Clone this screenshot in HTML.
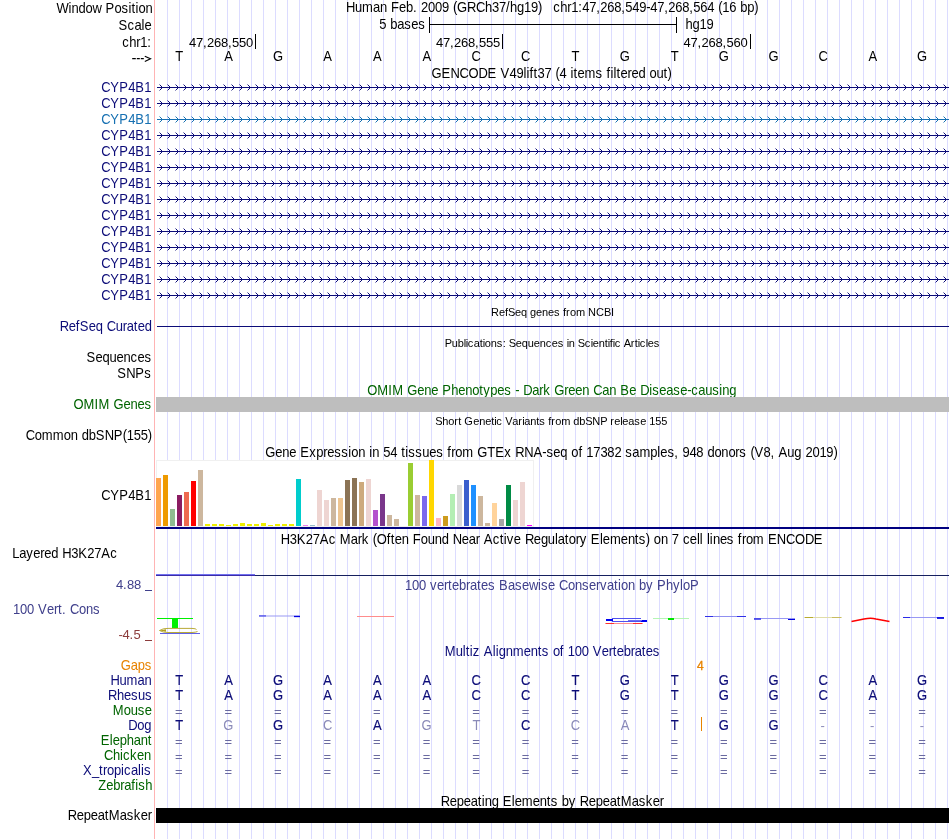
<!DOCTYPE html>
<html><head><meta charset="utf-8"><style>
html,body{margin:0;padding:0;background:#fff;width:950px;height:839px;overflow:hidden}
svg{display:block;font-family:"Liberation Sans",sans-serif;will-change:transform;font-kerning:none;font-variant-ligatures:none}
</style></head><body>
<svg width="950" height="839" viewBox="0 0 950 839" xml:space="preserve">
<g shape-rendering="crispEdges">
<rect x="154" y="0" width="1" height="839" fill="#ffb4b4" />
<rect x="167" y="0" width="1" height="839" fill="#dcdcff" />
<rect x="179" y="0" width="1" height="839" fill="#dcdcff" />
<rect x="191" y="0" width="1" height="839" fill="#dcdcff" />
<rect x="203" y="0" width="1" height="839" fill="#dcdcff" />
<rect x="215" y="0" width="1" height="839" fill="#dcdcff" />
<rect x="227" y="0" width="1" height="839" fill="#dcdcff" />
<rect x="239" y="0" width="1" height="839" fill="#dcdcff" />
<rect x="251" y="0" width="1" height="839" fill="#dcdcff" />
<rect x="263" y="0" width="1" height="839" fill="#dcdcff" />
<rect x="275" y="0" width="1" height="839" fill="#dcdcff" />
<rect x="287" y="0" width="1" height="839" fill="#dcdcff" />
<rect x="299" y="0" width="1" height="839" fill="#dcdcff" />
<rect x="311" y="0" width="1" height="839" fill="#dcdcff" />
<rect x="323" y="0" width="1" height="839" fill="#dcdcff" />
<rect x="335" y="0" width="1" height="839" fill="#dcdcff" />
<rect x="347" y="0" width="1" height="839" fill="#dcdcff" />
<rect x="359" y="0" width="1" height="839" fill="#dcdcff" />
<rect x="371" y="0" width="1" height="839" fill="#dcdcff" />
<rect x="383" y="0" width="1" height="839" fill="#dcdcff" />
<rect x="395" y="0" width="1" height="839" fill="#dcdcff" />
<rect x="407" y="0" width="1" height="839" fill="#dcdcff" />
<rect x="419" y="0" width="1" height="839" fill="#dcdcff" />
<rect x="431" y="0" width="1" height="839" fill="#dcdcff" />
<rect x="443" y="0" width="1" height="839" fill="#dcdcff" />
<rect x="455" y="0" width="1" height="839" fill="#dcdcff" />
<rect x="467" y="0" width="1" height="839" fill="#dcdcff" />
<rect x="479" y="0" width="1" height="839" fill="#dcdcff" />
<rect x="491" y="0" width="1" height="839" fill="#dcdcff" />
<rect x="503" y="0" width="1" height="839" fill="#dcdcff" />
<rect x="515" y="0" width="1" height="839" fill="#dcdcff" />
<rect x="527" y="0" width="1" height="839" fill="#dcdcff" />
<rect x="539" y="0" width="1" height="839" fill="#dcdcff" />
<rect x="551" y="0" width="1" height="839" fill="#dcdcff" />
<rect x="563" y="0" width="1" height="839" fill="#dcdcff" />
<rect x="575" y="0" width="1" height="839" fill="#dcdcff" />
<rect x="587" y="0" width="1" height="839" fill="#dcdcff" />
<rect x="599" y="0" width="1" height="839" fill="#dcdcff" />
<rect x="611" y="0" width="1" height="839" fill="#dcdcff" />
<rect x="623" y="0" width="1" height="839" fill="#dcdcff" />
<rect x="635" y="0" width="1" height="839" fill="#dcdcff" />
<rect x="647" y="0" width="1" height="839" fill="#dcdcff" />
<rect x="659" y="0" width="1" height="839" fill="#dcdcff" />
<rect x="671" y="0" width="1" height="839" fill="#dcdcff" />
<rect x="683" y="0" width="1" height="839" fill="#dcdcff" />
<rect x="695" y="0" width="1" height="839" fill="#dcdcff" />
<rect x="707" y="0" width="1" height="839" fill="#dcdcff" />
<rect x="719" y="0" width="1" height="839" fill="#dcdcff" />
<rect x="731" y="0" width="1" height="839" fill="#dcdcff" />
<rect x="743" y="0" width="1" height="839" fill="#dcdcff" />
<rect x="755" y="0" width="1" height="839" fill="#dcdcff" />
<rect x="767" y="0" width="1" height="839" fill="#dcdcff" />
<rect x="779" y="0" width="1" height="839" fill="#dcdcff" />
<rect x="791" y="0" width="1" height="839" fill="#dcdcff" />
<rect x="803" y="0" width="1" height="839" fill="#dcdcff" />
<rect x="815" y="0" width="1" height="839" fill="#dcdcff" />
<rect x="827" y="0" width="1" height="839" fill="#dcdcff" />
<rect x="839" y="0" width="1" height="839" fill="#dcdcff" />
<rect x="851" y="0" width="1" height="839" fill="#dcdcff" />
<rect x="863" y="0" width="1" height="839" fill="#dcdcff" />
<rect x="875" y="0" width="1" height="839" fill="#dcdcff" />
<rect x="887" y="0" width="1" height="839" fill="#dcdcff" />
<rect x="899" y="0" width="1" height="839" fill="#dcdcff" />
<rect x="911" y="0" width="1" height="839" fill="#dcdcff" />
<rect x="923" y="0" width="1" height="839" fill="#dcdcff" />
<rect x="935" y="0" width="1" height="839" fill="#dcdcff" />
<rect x="947" y="0" width="1" height="839" fill="#dcdcff" />
</g>
<text transform="translate(56.40,13) scale(0.9286,1)" x="0.00 12.92 16.15 23.69 31.23 38.77 48.46 52.77 62.46 70.00 77.54 80.77 85.08 88.31 95.85" fill="#000" font-size="14">Window Position</text>
<text transform="translate(118.57,30) scale(0.9286,1)" x="0.00 9.69 17.23 24.77 28.00" fill="#000" font-size="14">Scale</text>
<text transform="translate(122.17,47) scale(0.9286,1)" x="0.00 7.54 15.08 19.38 26.92" fill="#000" font-size="14">chr1:</text>
<path d="M132.2 58.6H135.8M136.8 58.6H139.8M140.8 58.6H143.8M144.8 56.2L150.5 58.8L144.8 61.4" stroke="#000" stroke-width="1.15" fill="none"/>
<text transform="translate(345.97,12) scale(0.9286,1)" x="0.00 9.69 17.23 29.08 36.62 44.15 48.46 57.08 64.62 72.15 76.46 80.77 88.31 95.85 103.38 110.92 115.23 119.54 130.31 140.00 149.69 157.23 164.77 172.31 176.62 184.15 191.69 199.23 206.77" fill="#000" font-size="14">Human Feb. 2009 (GRCh37/hg19)</text>
<text transform="translate(553.17,12) scale(0.9286,1)" x="0.00 7.54 15.08 19.38 26.92 31.23 38.77 46.31 50.62 58.15 65.69 73.23 77.54 85.08 92.62 100.15 104.46 112.00 119.54 123.85 131.38 138.92 146.46 150.77 158.31 165.85 173.38 177.69 182.00 189.54 197.08 201.38 208.92 216.46" fill="#000" font-size="14">chr1:47,268,549-47,268,564 (16 bp)</text>
<text transform="translate(379.37,29) scale(0.9286,1)" x="0.00 7.54 11.85 19.38 26.92 34.46 42.00" fill="#000" font-size="14">5 bases</text>
<g shape-rendering="crispEdges">
<rect x="429" y="17" width="1" height="16" fill="#000" />
<rect x="676" y="17" width="1" height="16" fill="#000" />
<rect x="429" y="24" width="248" height="1" fill="#000" />
<rect x="255" y="34" width="1" height="15" fill="#000" />
<rect x="502" y="34" width="1" height="15" fill="#000" />
<rect x="750" y="34" width="1" height="15" fill="#000" />
</g>
<text transform="translate(685.57,29) scale(0.9286,1)" x="0.00 7.54 15.08 22.62" fill="#000" font-size="14">hg19</text>
<text transform="translate(189.00,47) scale(1.0000,1)" x="0.00 7.00 14.00 18.00 25.00 32.00 39.00 43.00 50.00 57.00" fill="#000" font-size="13">47,268,550</text>
<text transform="translate(436.10,47) scale(1.0000,1)" x="0.00 7.00 14.00 18.00 25.00 32.00 39.00 43.00 50.00 57.00" fill="#000" font-size="13">47,268,555</text>
<text transform="translate(683.50,47) scale(1.0000,1)" x="0.00 7.00 14.00 18.00 25.00 32.00 39.00 43.00 50.00 57.00" fill="#000" font-size="13">47,268,560</text>
<text transform="translate(175.19,61) scale(0.9286,1)" fill="#000" font-size="14">T</text>
<text transform="translate(224.27,61) scale(0.9286,1)" fill="#000" font-size="14">A</text>
<text transform="translate(272.89,61) scale(0.9286,1)" fill="#000" font-size="14">G</text>
<text transform="translate(323.37,61) scale(0.9286,1)" fill="#000" font-size="14">A</text>
<text transform="translate(372.92,61) scale(0.9286,1)" fill="#000" font-size="14">A</text>
<text transform="translate(422.47,61) scale(0.9286,1)" fill="#000" font-size="14">A</text>
<text transform="translate(471.56,61) scale(0.9286,1)" fill="#000" font-size="14">C</text>
<text transform="translate(521.11,61) scale(0.9286,1)" fill="#000" font-size="14">C</text>
<text transform="translate(571.59,61) scale(0.9286,1)" fill="#000" font-size="14">T</text>
<text transform="translate(619.74,61) scale(0.9286,1)" fill="#000" font-size="14">G</text>
<text transform="translate(670.69,61) scale(0.9286,1)" fill="#000" font-size="14">T</text>
<text transform="translate(718.84,61) scale(0.9286,1)" fill="#000" font-size="14">G</text>
<text transform="translate(768.39,61) scale(0.9286,1)" fill="#000" font-size="14">G</text>
<text transform="translate(818.41,61) scale(0.9286,1)" fill="#000" font-size="14">C</text>
<text transform="translate(868.42,61) scale(0.9286,1)" fill="#000" font-size="14">A</text>
<text transform="translate(917.04,61) scale(0.9286,1)" fill="#000" font-size="14">G</text>
<text transform="translate(431.47,78) scale(0.9286,1)" x="0.00 10.77 20.46 30.15 39.85 50.62 60.31 70.00 74.31 84.00 91.54 99.08 102.31 105.54 109.85 114.15 121.69 129.23 133.54 137.85 145.38 149.69 152.92 157.23 164.77 176.62 184.15 188.46 192.77 196.00 199.23 203.54 211.08 215.38 222.92 230.46 234.77 242.31 249.85 254.15" fill="#000" font-size="14">GENCODE V49lift37 (4 items filtered out)</text>
<defs>
<pattern id="chevN" x="157" y="0" width="8" height="16" patternUnits="userSpaceOnUse"><g shape-rendering="crispEdges" fill="#0c0c78"><rect x="0" y="7" width="8" height="1"/><rect x="2" y="4" width="1" height="1" opacity="0.45"/><rect x="3" y="5" width="1" height="1"/><rect x="4" y="6" width="1" height="3"/><rect x="3" y="9" width="1" height="1"/><rect x="2" y="10" width="1" height="1" opacity="0.45"/></g></pattern>
<pattern id="chevT" x="157" y="0" width="8" height="16" patternUnits="userSpaceOnUse"><g shape-rendering="crispEdges" fill="#1670b2"><rect x="0" y="7" width="8" height="1"/><rect x="2" y="4" width="1" height="1" opacity="0.45"/><rect x="3" y="5" width="1" height="1"/><rect x="4" y="6" width="1" height="3"/><rect x="3" y="9" width="1" height="1"/><rect x="2" y="10" width="1" height="1" opacity="0.45"/></g></pattern>
</defs>
<text transform="translate(101.27,92) scale(0.9286,1)" x="0.00 9.69 19.38 29.08 36.62 46.31" fill="#0c0c78" font-size="14">CYP4B1</text>
<rect x="157" y="80" width="792" height="16" fill="url(#chevN)" shape-rendering="crispEdges"/>
<text transform="translate(101.27,108) scale(0.9286,1)" x="0.00 9.69 19.38 29.08 36.62 46.31" fill="#0c0c78" font-size="14">CYP4B1</text>
<rect x="157" y="96" width="792" height="16" fill="url(#chevN)" shape-rendering="crispEdges"/>
<text transform="translate(101.27,124) scale(0.9286,1)" x="0.00 9.69 19.38 29.08 36.62 46.31" fill="#1670b2" font-size="14">CYP4B1</text>
<rect x="157" y="112" width="792" height="16" fill="url(#chevT)" shape-rendering="crispEdges"/>
<text transform="translate(101.27,140) scale(0.9286,1)" x="0.00 9.69 19.38 29.08 36.62 46.31" fill="#0c0c78" font-size="14">CYP4B1</text>
<rect x="157" y="128" width="792" height="16" fill="url(#chevN)" shape-rendering="crispEdges"/>
<text transform="translate(101.27,156) scale(0.9286,1)" x="0.00 9.69 19.38 29.08 36.62 46.31" fill="#0c0c78" font-size="14">CYP4B1</text>
<rect x="157" y="144" width="792" height="16" fill="url(#chevN)" shape-rendering="crispEdges"/>
<text transform="translate(101.27,172) scale(0.9286,1)" x="0.00 9.69 19.38 29.08 36.62 46.31" fill="#0c0c78" font-size="14">CYP4B1</text>
<rect x="157" y="160" width="792" height="16" fill="url(#chevN)" shape-rendering="crispEdges"/>
<text transform="translate(101.27,188) scale(0.9286,1)" x="0.00 9.69 19.38 29.08 36.62 46.31" fill="#0c0c78" font-size="14">CYP4B1</text>
<rect x="157" y="176" width="792" height="16" fill="url(#chevN)" shape-rendering="crispEdges"/>
<text transform="translate(101.27,204) scale(0.9286,1)" x="0.00 9.69 19.38 29.08 36.62 46.31" fill="#0c0c78" font-size="14">CYP4B1</text>
<rect x="157" y="192" width="792" height="16" fill="url(#chevN)" shape-rendering="crispEdges"/>
<text transform="translate(101.27,220) scale(0.9286,1)" x="0.00 9.69 19.38 29.08 36.62 46.31" fill="#0c0c78" font-size="14">CYP4B1</text>
<rect x="157" y="208" width="792" height="16" fill="url(#chevN)" shape-rendering="crispEdges"/>
<text transform="translate(101.27,236) scale(0.9286,1)" x="0.00 9.69 19.38 29.08 36.62 46.31" fill="#0c0c78" font-size="14">CYP4B1</text>
<rect x="157" y="224" width="792" height="16" fill="url(#chevN)" shape-rendering="crispEdges"/>
<text transform="translate(101.27,252) scale(0.9286,1)" x="0.00 9.69 19.38 29.08 36.62 46.31" fill="#0c0c78" font-size="14">CYP4B1</text>
<rect x="157" y="240" width="792" height="16" fill="url(#chevN)" shape-rendering="crispEdges"/>
<text transform="translate(101.27,268) scale(0.9286,1)" x="0.00 9.69 19.38 29.08 36.62 46.31" fill="#0c0c78" font-size="14">CYP4B1</text>
<rect x="157" y="256" width="792" height="16" fill="url(#chevN)" shape-rendering="crispEdges"/>
<text transform="translate(101.27,284) scale(0.9286,1)" x="0.00 9.69 19.38 29.08 36.62 46.31" fill="#0c0c78" font-size="14">CYP4B1</text>
<rect x="157" y="272" width="792" height="16" fill="url(#chevN)" shape-rendering="crispEdges"/>
<text transform="translate(101.27,300) scale(0.9286,1)" x="0.00 9.69 19.38 29.08 36.62 46.31" fill="#0c0c78" font-size="14">CYP4B1</text>
<rect x="157" y="288" width="792" height="16" fill="url(#chevN)" shape-rendering="crispEdges"/>
<text transform="translate(490.90,316) scale(1.0000,1)" x="0.00 8.00 14.00 17.00 24.00 30.00 36.00 39.00 45.00 51.00 57.00 63.00 69.00 72.00 75.00 79.00 85.00 94.00 97.00 105.00 113.00 120.00" fill="#000" font-size="11">RefSeq genes from NCBI</text>
<text transform="translate(59.67,331) scale(0.9286,1)" x="0.00 9.69 17.23 21.54 31.23 38.77 46.31 50.62 60.31 67.85 72.15 79.69 84.00 91.54" fill="#0c0c78" font-size="14">RefSeq Curated</text>
<rect x="157" y="326" width="792" height="1" fill="#0c0c78" shape-rendering="crispEdges"/>
<text transform="translate(444.80,347) scale(1.0000,1)" x="0.00 7.00 13.00 19.00 21.00 23.00 29.00 35.00 38.00 40.00 46.00 52.00 58.00 61.00 64.00 71.00 77.00 83.00 89.00 95.00 101.00 107.00 113.00 119.00 122.00 124.00 130.00 133.00 140.00 146.00 148.00 154.00 160.00 163.00 165.00 168.00 170.00 176.00 179.00 186.00 190.00 193.00 195.00 201.00 203.00 209.00" fill="#000" font-size="11">Publications: Sequences in Scientific Articles</text>
<text transform="translate(86.47,362) scale(0.9286,1)" x="0.00 9.69 17.23 24.77 32.31 39.85 47.38 54.92 62.46" fill="#000" font-size="14">Sequences</text>
<text transform="translate(117.27,378) scale(0.9286,1)" x="0.00 9.69 19.38 29.08" fill="#000" font-size="14">SNPs</text>
<text transform="translate(367.27,395) scale(0.9286,1)" x="0.00 10.77 22.62 26.92 38.77 43.08 53.85 61.38 68.92 76.46 80.77 90.46 98.00 105.54 113.08 120.62 124.92 132.46 140.00 147.54 155.08 159.38 163.69 168.00 177.69 185.23 189.54 197.08 201.38 212.15 216.46 224.00 231.54 239.08 243.38 253.08 260.62 268.15 272.46 282.15 289.69 294.00 303.69 306.92 314.46 322.00 329.54 337.08 344.62 348.92 356.46 364.00 371.54 379.08 382.31 389.85" fill="#006400" font-size="14">OMIM Gene Phenotypes - Dark Green Can Be Disease-causing</text>
<text transform="translate(73.47,409) scale(0.9286,1)" x="0.00 10.77 22.62 26.92 38.77 43.08 53.85 61.38 68.92 76.46" fill="#006400" font-size="14">OMIM Genes</text>
<rect x="156" y="397" width="793" height="15" fill="#bebebe" shape-rendering="crispEdges"/>
<text transform="translate(435.30,425) scale(1.0000,1)" x="0.00 7.00 13.00 19.00 23.00 26.00 29.00 38.00 44.00 50.00 56.00 59.00 61.00 67.00 70.00 77.00 83.00 87.00 89.00 95.00 101.00 104.00 110.00 113.00 116.00 120.00 126.00 135.00 138.00 144.00 150.00 157.00 165.00 172.00 175.00 179.00 185.00 187.00 193.00 199.00 205.00 211.00 214.00 220.00 226.00" fill="#000" font-size="11">Short Genetic Variants from dbSNP release 155</text>
<text transform="translate(25.77,440) scale(0.9286,1)" x="0.00 9.69 17.23 29.08 40.92 48.46 56.00 60.31 67.85 75.38 85.08 94.77 104.46 108.77 116.31 123.85 131.38" fill="#000" font-size="14">Common dbSNP(155)</text>
<text transform="translate(265.37,457) scale(0.9286,1)" x="0.00 10.77 18.31 25.85 33.38 37.69 47.38 54.92 62.46 66.77 74.31 81.85 89.38 92.62 100.15 107.69 112.00 115.23 122.77 127.08 134.62 142.15 146.46 150.77 154.00 161.54 169.08 176.62 184.15 191.69 196.00 200.31 204.62 212.15 224.00 228.31 239.08 247.69 257.38 264.92 269.23 278.92 288.62 298.31 302.62 310.15 317.69 325.23 329.54 337.08 341.38 345.69 353.23 360.77 368.31 375.85 383.38 387.69 395.23 402.77 414.62 422.15 425.38 432.92 440.46 444.77 449.08 456.62 464.15 471.69 476.00 483.54 491.08 498.62 506.15 510.46 518.00 522.31 526.62 536.31 543.85 548.15 552.46 562.15 569.69 577.23 581.54 589.08 596.62 604.15 611.69" fill="#000" font-size="14">Gene Expression in 54 tissues from GTEx RNA-seq of 17382 samples, 948 donors (V8, Aug 2019)</text>
<text transform="translate(101.17,500) scale(0.9286,1)" x="0.00 9.69 19.38 29.08 36.62 46.31" fill="#000" font-size="14">CYP4B1</text>
<g shape-rendering="crispEdges">
<rect x="156.5" y="460.5" width="377" height="66" fill="#fff" stroke="#f0f0f0" stroke-width="1"/>
<rect x="156" y="478" width="5" height="48" fill="#ffa54f" />
<rect x="163" y="475" width="5" height="51" fill="#ee9a00" />
<rect x="170" y="509" width="5" height="17" fill="#8fbc8f" />
<rect x="177" y="495" width="5" height="31" fill="#8b1c62" />
<rect x="184" y="492" width="5" height="34" fill="#ee6a50" />
<rect x="191" y="481" width="5" height="45" fill="#ff0000" />
<rect x="198" y="470" width="5" height="56" fill="#cdb79e" />
<rect x="205" y="524" width="5" height="2" fill="#eeee00" />
<rect x="212" y="524" width="5" height="2" fill="#eeee00" />
<rect x="219" y="524" width="5" height="2" fill="#eeee00" />
<rect x="226" y="525" width="5" height="1" fill="#eeee00" />
<rect x="233" y="524" width="5" height="2" fill="#eeee00" />
<rect x="240" y="523" width="5" height="3" fill="#eeee00" />
<rect x="247" y="524" width="5" height="2" fill="#eeee00" />
<rect x="254" y="524" width="5" height="2" fill="#eeee00" />
<rect x="261" y="523" width="5" height="3" fill="#eeee00" />
<rect x="268" y="525" width="5" height="1" fill="#eeee00" />
<rect x="275" y="524" width="5" height="2" fill="#eeee00" />
<rect x="282" y="524" width="5" height="2" fill="#eeee00" />
<rect x="289" y="524" width="5" height="2" fill="#eeee00" />
<rect x="296" y="479" width="5" height="47" fill="#00cdcd" />
<rect x="303" y="525" width="5" height="1" fill="#ee82ee" />
<rect x="310" y="525" width="5" height="1" fill="#9ac0cd" />
<rect x="317" y="490" width="5" height="36" fill="#eed5d2" />
<rect x="324" y="500" width="5" height="26" fill="#eed5d2" />
<rect x="331" y="498" width="5" height="28" fill="#cdb79e" />
<rect x="338" y="498" width="5" height="28" fill="#eec591" />
<rect x="345" y="480" width="5" height="46" fill="#8b7355" />
<rect x="352" y="478" width="5" height="48" fill="#8b7355" />
<rect x="359" y="482" width="5" height="44" fill="#cdaa7d" />
<rect x="366" y="479" width="5" height="47" fill="#eed5d2" />
<rect x="373" y="510" width="5" height="16" fill="#b452cd" />
<rect x="380" y="494" width="5" height="32" fill="#7a378b" />
<rect x="387" y="515" width="5" height="11" fill="#cdb79e" />
<rect x="394" y="519" width="5" height="7" fill="#cdb79e" />
<rect x="408" y="463" width="5" height="63" fill="#9acd32" />
<rect x="415" y="495" width="5" height="31" fill="#cdb79e" />
<rect x="422" y="496" width="5" height="30" fill="#7b68ee" />
<rect x="429" y="460" width="5" height="66" fill="#ffd700" />
<rect x="436" y="518" width="5" height="8" fill="#ffb6c1" />
<rect x="443" y="516" width="5" height="10" fill="#cd9b1d" />
<rect x="450" y="494" width="5" height="32" fill="#b4eeb4" />
<rect x="457" y="485" width="5" height="41" fill="#d9d9d9" />
<rect x="464" y="480" width="5" height="46" fill="#3a5fcd" />
<rect x="471" y="485" width="5" height="41" fill="#1e90ff" />
<rect x="478" y="496" width="5" height="30" fill="#cdb79e" />
<rect x="485" y="523" width="5" height="3" fill="#cdb79e" />
<rect x="492" y="503" width="5" height="23" fill="#ffd39b" />
<rect x="499" y="519" width="5" height="7" fill="#a6a6a6" />
<rect x="506" y="485" width="5" height="41" fill="#008b45" />
<rect x="513" y="500" width="5" height="26" fill="#eed5d2" />
<rect x="520" y="482" width="5" height="44" fill="#eed5d2" />
<rect x="527" y="525" width="5" height="1" fill="#ff00ff" />
<rect x="156" y="527" width="793" height="2" fill="#000080" />
</g>
<text transform="translate(280.87,544) scale(0.9286,1)" x="0.00 9.69 17.23 26.92 34.46 42.00 51.69 59.23 63.54 75.38 82.92 87.23 94.77 99.08 103.38 114.15 118.46 122.77 130.31 137.85 142.15 150.77 158.31 165.85 173.38 180.92 185.23 194.92 202.46 210.00 214.31 218.62 228.31 235.85 240.15 243.38 250.92 258.46 262.77 272.46 280.00 287.54 295.08 298.31 305.85 310.15 317.69 322.00 329.54 333.85 343.54 346.77 354.31 366.15 373.69 381.23 385.54 393.08 397.38 401.69 409.23 416.77 421.08 428.62 432.92 440.46 448.00 451.23 454.46 458.77 462.00 465.23 472.77 480.31 487.85 492.15 496.46 500.77 508.31 520.15 524.46 534.15 543.85 553.54 564.31 574.00" fill="#000" font-size="14">H3K27Ac Mark (Often Found Near Active Regulatory Elements) on 7 cell lines from ENCODE</text>
<text transform="translate(12.37,558) scale(0.9286,1)" x="0.00 7.54 15.08 22.62 30.15 34.46 42.00 49.54 53.85 63.54 71.08 80.77 88.31 95.85 105.54" fill="#000" font-size="14">Layered H3K27Ac</text>
<g shape-rendering="crispEdges">
<rect x="156" y="575" width="793" height="1" fill="#16205e" />
<rect x="156" y="574" width="99" height="1" fill="#7070f0" />
<rect x="156" y="575" width="99" height="1" fill="#3c2ca8" />
</g>
<text transform="translate(405.07,590) scale(0.9286,1)" x="0.00 7.54 15.08 22.62 26.92 34.46 42.00 46.31 50.62 58.15 65.69 70.00 77.54 81.85 89.38 96.92 101.23 110.92 118.46 126.00 133.54 143.23 146.46 154.00 161.54 165.85 175.54 183.08 190.62 198.15 205.69 210.00 217.54 225.08 229.38 232.62 240.15 247.69 252.00 259.54 267.08 271.38 281.08 288.62 296.15 299.38 306.92" fill="#40408c" font-size="14">100 vertebrates Basewise Conservation by PhyloP</text>
<text transform="translate(115.90,589) scale(1.0000,1)" x="0.00 7.00 11.00 18.00" fill="#40408c" font-size="13">4.88</text>
<rect x="145" y="590" width="7" height="1" fill="#40408c" shape-rendering="crispEdges"/>
<text transform="translate(13.07,614) scale(0.9286,1)" x="0.00 7.54 15.08 22.62 26.92 36.62 44.15 48.46 52.77 57.08 61.38 71.08 78.62 86.15" fill="#40408c" font-size="14">100 Vert. Cons</text>
<text transform="translate(118.40,639) scale(1.0000,1)" x="0.00 4.00 11.00 15.00" fill="#8c3c3c" font-size="13">-4.5</text>
<rect x="145" y="640" width="7" height="1" fill="#8c3c3c" shape-rendering="crispEdges"/>
<g shape-rendering="crispEdges">
<rect x="157" y="618" width="36" height="1" fill="#00f000" />
<rect x="172" y="619" width="6" height="9" fill="#00f000" />
</g>
<path d="M159.5 630.5 Q163 628.2 168 628.4 L192 628.4 Q196 628.6 196.5 629.5 M159.5 630.5 Q163 632.6 168 632.5 L192 632.5 Q196 632.3 197.5 631.5" stroke="#b0a020" stroke-width="0.9" fill="none"/>
<path d="M159.5 630.5 L166 629.2 L166 631.8 Z" fill="#b0a020"/>
<g shape-rendering="crispEdges">
<rect x="160" y="633" width="40" height="1" fill="#6060e8" />
</g>
<path d="M259 616H300" stroke="#9a9af4" stroke-width="1.1"/>
<path d="M259 615.9H266" stroke="#3a3ae8" stroke-width="1.4" opacity="0.75"/>
<path d="M294 616.5H300" stroke="#0000e0" stroke-width="1.3"/>
<g shape-rendering="crispEdges">
<rect x="357" y="616" width="37" height="1" fill="#ff8c8c" />
<rect x="612" y="618" width="29" height="1" fill="#5050f0" />
<rect x="612" y="621" width="29" height="1" fill="#5050f0" />
<rect x="606" y="619" width="7" height="2" fill="#0000f0" />
<rect x="641" y="620" width="6" height="2" fill="#0000f0" />
<rect x="628" y="620" width="14" height="1" fill="#7070f0" />
<rect x="605" y="623" width="38" height="1" fill="#ff9090" />
<rect x="606" y="623" width="8" height="1" fill="#ff3030" />
<rect x="633" y="623" width="9" height="1" fill="#ff3030" />
<rect x="653" y="618" width="36" height="1" fill="#b4f5b4" />
<rect x="668" y="618" width="6" height="2" fill="#00e600" />
<rect x="705" y="616" width="41" height="1" fill="#9090f0" />
<rect x="705" y="616" width="8" height="1" fill="#3030e8" />
<rect x="737" y="616" width="9" height="1" fill="#3030e8" />
<rect x="754" y="618" width="41" height="1" fill="#9898f4" />
<rect x="754" y="618" width="7" height="2" fill="#3a3ae8" opacity="0.8"/>
<rect x="788" y="619" width="7" height="1" fill="#0000e0" />
<rect x="804" y="617" width="38" height="1" fill="#e0dca8" />
<rect x="805" y="617" width="8" height="1" fill="#b8aa30" />
<rect x="832" y="617" width="9" height="1" fill="#c8bc60" />
<rect x="903" y="617" width="41" height="1" fill="#9898f4" />
<rect x="903" y="617" width="7" height="1" fill="#2a2ae8" />
<rect x="937" y="617" width="7" height="2" fill="#0000e0" opacity="0.85"/>
</g>
<path d="M851.5 621.4 L864 619 Q871 617.6 876 619 L889.5 621.4" stroke="#ff0000" stroke-width="1.5" fill="none"/>
<text transform="translate(444.87,656) scale(0.9286,1)" x="0.00 11.85 19.38 22.62 26.92 30.15 37.69 42.00 51.69 54.92 58.15 65.69 73.23 85.08 92.62 100.15 104.46 112.00 116.31 123.85 128.15 132.46 140.00 147.54 155.08 159.38 169.08 176.62 180.92 185.23 192.77 200.31 204.62 212.15 216.46 224.00" fill="#0c0c78" font-size="14">Multiz Alignments of 100 Vertebrates</text>
<text transform="translate(120.87,670) scale(0.9286,1)" x="0.00 10.77 18.31 25.85" fill="#e88300" font-size="14">Gaps</text>
<text transform="translate(110.57,685) scale(0.9286,1)" x="0.00 9.69 17.23 29.08 36.62" fill="#0c0c78" font-size="14">Human</text>
<text transform="translate(107.97,700) scale(0.9286,1)" x="0.00 9.69 17.23 24.77 32.31 39.85" fill="#0c0c78" font-size="14">Rhesus</text>
<text transform="translate(112.67,715) scale(0.9286,1)" x="0.00 11.85 19.38 26.92 34.46" fill="#006400" font-size="14">Mouse</text>
<text transform="translate(128.17,730) scale(0.9286,1)" x="0.00 9.69 17.23" fill="#0c0c78" font-size="14">Dog</text>
<text transform="translate(100.87,745) scale(0.9286,1)" x="0.00 9.69 12.92 20.46 28.00 35.54 43.08 50.62" fill="#006400" font-size="14">Elephant</text>
<text transform="translate(104.07,760) scale(0.9286,1)" x="0.00 9.69 17.23 20.46 28.00 35.54 43.08" fill="#006400" font-size="14">Chicken</text>
<text transform="translate(83.07,775) scale(0.9286,1)" x="0.00 9.69 17.23 21.54 25.85 33.38 40.92 44.15 51.69 59.23 62.46 65.69" fill="#0c0c78" font-size="14">X_tropicalis</text>
<text transform="translate(98.20,790) scale(0.9286,1)" x="0.00 8.62 16.15 23.69 28.00 35.54 39.85 43.08 50.62" fill="#006400" font-size="14">Zebrafish</text>
<text transform="translate(697.00,670) scale(1.0000,1)" fill="#e88300" font-size="12" stroke="#e88300" stroke-width="0.3">4</text>
<text transform="translate(175.19,685) scale(0.9286,1)" fill="#0c0c78" font-size="14" stroke="#0c0c78" stroke-width="0.15">T</text>
<text transform="translate(175.19,700) scale(0.9286,1)" fill="#0c0c78" font-size="14" stroke="#0c0c78" stroke-width="0.15">T</text>
<text transform="translate(224.27,685) scale(0.9286,1)" fill="#0c0c78" font-size="14" stroke="#0c0c78" stroke-width="0.15">A</text>
<text transform="translate(224.27,700) scale(0.9286,1)" fill="#0c0c78" font-size="14" stroke="#0c0c78" stroke-width="0.15">A</text>
<text transform="translate(272.89,685) scale(0.9286,1)" fill="#0c0c78" font-size="14" stroke="#0c0c78" stroke-width="0.15">G</text>
<text transform="translate(272.89,700) scale(0.9286,1)" fill="#0c0c78" font-size="14" stroke="#0c0c78" stroke-width="0.15">G</text>
<text transform="translate(323.37,685) scale(0.9286,1)" fill="#0c0c78" font-size="14" stroke="#0c0c78" stroke-width="0.15">A</text>
<text transform="translate(323.37,700) scale(0.9286,1)" fill="#0c0c78" font-size="14" stroke="#0c0c78" stroke-width="0.15">A</text>
<text transform="translate(372.92,685) scale(0.9286,1)" fill="#0c0c78" font-size="14" stroke="#0c0c78" stroke-width="0.15">A</text>
<text transform="translate(372.92,700) scale(0.9286,1)" fill="#0c0c78" font-size="14" stroke="#0c0c78" stroke-width="0.15">A</text>
<text transform="translate(422.47,685) scale(0.9286,1)" fill="#0c0c78" font-size="14" stroke="#0c0c78" stroke-width="0.15">A</text>
<text transform="translate(422.47,700) scale(0.9286,1)" fill="#0c0c78" font-size="14" stroke="#0c0c78" stroke-width="0.15">A</text>
<text transform="translate(471.56,685) scale(0.9286,1)" fill="#0c0c78" font-size="14" stroke="#0c0c78" stroke-width="0.15">C</text>
<text transform="translate(471.56,700) scale(0.9286,1)" fill="#0c0c78" font-size="14" stroke="#0c0c78" stroke-width="0.15">C</text>
<text transform="translate(521.11,685) scale(0.9286,1)" fill="#0c0c78" font-size="14" stroke="#0c0c78" stroke-width="0.15">C</text>
<text transform="translate(521.11,700) scale(0.9286,1)" fill="#0c0c78" font-size="14" stroke="#0c0c78" stroke-width="0.15">C</text>
<text transform="translate(571.59,685) scale(0.9286,1)" fill="#0c0c78" font-size="14" stroke="#0c0c78" stroke-width="0.15">T</text>
<text transform="translate(571.59,700) scale(0.9286,1)" fill="#0c0c78" font-size="14" stroke="#0c0c78" stroke-width="0.15">T</text>
<text transform="translate(619.74,685) scale(0.9286,1)" fill="#0c0c78" font-size="14" stroke="#0c0c78" stroke-width="0.15">G</text>
<text transform="translate(619.74,700) scale(0.9286,1)" fill="#0c0c78" font-size="14" stroke="#0c0c78" stroke-width="0.15">G</text>
<text transform="translate(670.69,685) scale(0.9286,1)" fill="#0c0c78" font-size="14" stroke="#0c0c78" stroke-width="0.15">T</text>
<text transform="translate(670.69,700) scale(0.9286,1)" fill="#0c0c78" font-size="14" stroke="#0c0c78" stroke-width="0.15">T</text>
<text transform="translate(718.84,685) scale(0.9286,1)" fill="#0c0c78" font-size="14" stroke="#0c0c78" stroke-width="0.15">G</text>
<text transform="translate(718.84,700) scale(0.9286,1)" fill="#0c0c78" font-size="14" stroke="#0c0c78" stroke-width="0.15">G</text>
<text transform="translate(768.39,685) scale(0.9286,1)" fill="#0c0c78" font-size="14" stroke="#0c0c78" stroke-width="0.15">G</text>
<text transform="translate(768.39,700) scale(0.9286,1)" fill="#0c0c78" font-size="14" stroke="#0c0c78" stroke-width="0.15">G</text>
<text transform="translate(818.41,685) scale(0.9286,1)" fill="#0c0c78" font-size="14" stroke="#0c0c78" stroke-width="0.15">C</text>
<text transform="translate(818.41,700) scale(0.9286,1)" fill="#0c0c78" font-size="14" stroke="#0c0c78" stroke-width="0.15">C</text>
<text transform="translate(868.42,685) scale(0.9286,1)" fill="#0c0c78" font-size="14" stroke="#0c0c78" stroke-width="0.15">A</text>
<text transform="translate(868.42,700) scale(0.9286,1)" fill="#0c0c78" font-size="14" stroke="#0c0c78" stroke-width="0.15">A</text>
<text transform="translate(917.04,685) scale(0.9286,1)" fill="#0c0c78" font-size="14" stroke="#0c0c78" stroke-width="0.15">G</text>
<text transform="translate(917.04,700) scale(0.9286,1)" fill="#0c0c78" font-size="14" stroke="#0c0c78" stroke-width="0.15">G</text>
<text transform="translate(174.90,716) scale(1.0000,1)" fill="#6a6aa0" font-size="13">=</text>
<text transform="translate(174.90,746) scale(1.0000,1)" fill="#6a6aa0" font-size="13">=</text>
<text transform="translate(174.90,761) scale(1.0000,1)" fill="#6a6aa0" font-size="13">=</text>
<text transform="translate(174.90,776) scale(1.0000,1)" fill="#6a6aa0" font-size="13">=</text>
<text transform="translate(224.45,716) scale(1.0000,1)" fill="#6a6aa0" font-size="13">=</text>
<text transform="translate(224.45,746) scale(1.0000,1)" fill="#6a6aa0" font-size="13">=</text>
<text transform="translate(224.45,761) scale(1.0000,1)" fill="#6a6aa0" font-size="13">=</text>
<text transform="translate(224.45,776) scale(1.0000,1)" fill="#6a6aa0" font-size="13">=</text>
<text transform="translate(274.00,716) scale(1.0000,1)" fill="#6a6aa0" font-size="13">=</text>
<text transform="translate(274.00,746) scale(1.0000,1)" fill="#6a6aa0" font-size="13">=</text>
<text transform="translate(274.00,761) scale(1.0000,1)" fill="#6a6aa0" font-size="13">=</text>
<text transform="translate(274.00,776) scale(1.0000,1)" fill="#6a6aa0" font-size="13">=</text>
<text transform="translate(323.55,716) scale(1.0000,1)" fill="#6a6aa0" font-size="13">=</text>
<text transform="translate(323.55,746) scale(1.0000,1)" fill="#6a6aa0" font-size="13">=</text>
<text transform="translate(323.55,761) scale(1.0000,1)" fill="#6a6aa0" font-size="13">=</text>
<text transform="translate(323.55,776) scale(1.0000,1)" fill="#6a6aa0" font-size="13">=</text>
<text transform="translate(373.10,716) scale(1.0000,1)" fill="#6a6aa0" font-size="13">=</text>
<text transform="translate(373.10,746) scale(1.0000,1)" fill="#6a6aa0" font-size="13">=</text>
<text transform="translate(373.10,761) scale(1.0000,1)" fill="#6a6aa0" font-size="13">=</text>
<text transform="translate(373.10,776) scale(1.0000,1)" fill="#6a6aa0" font-size="13">=</text>
<text transform="translate(422.65,716) scale(1.0000,1)" fill="#6a6aa0" font-size="13">=</text>
<text transform="translate(422.65,746) scale(1.0000,1)" fill="#6a6aa0" font-size="13">=</text>
<text transform="translate(422.65,761) scale(1.0000,1)" fill="#6a6aa0" font-size="13">=</text>
<text transform="translate(422.65,776) scale(1.0000,1)" fill="#6a6aa0" font-size="13">=</text>
<text transform="translate(472.20,716) scale(1.0000,1)" fill="#6a6aa0" font-size="13">=</text>
<text transform="translate(472.20,746) scale(1.0000,1)" fill="#6a6aa0" font-size="13">=</text>
<text transform="translate(472.20,761) scale(1.0000,1)" fill="#6a6aa0" font-size="13">=</text>
<text transform="translate(472.20,776) scale(1.0000,1)" fill="#6a6aa0" font-size="13">=</text>
<text transform="translate(521.75,716) scale(1.0000,1)" fill="#6a6aa0" font-size="13">=</text>
<text transform="translate(521.75,746) scale(1.0000,1)" fill="#6a6aa0" font-size="13">=</text>
<text transform="translate(521.75,761) scale(1.0000,1)" fill="#6a6aa0" font-size="13">=</text>
<text transform="translate(521.75,776) scale(1.0000,1)" fill="#6a6aa0" font-size="13">=</text>
<text transform="translate(571.30,716) scale(1.0000,1)" fill="#6a6aa0" font-size="13">=</text>
<text transform="translate(571.30,746) scale(1.0000,1)" fill="#6a6aa0" font-size="13">=</text>
<text transform="translate(571.30,761) scale(1.0000,1)" fill="#6a6aa0" font-size="13">=</text>
<text transform="translate(571.30,776) scale(1.0000,1)" fill="#6a6aa0" font-size="13">=</text>
<text transform="translate(620.85,716) scale(1.0000,1)" fill="#6a6aa0" font-size="13">=</text>
<text transform="translate(620.85,746) scale(1.0000,1)" fill="#6a6aa0" font-size="13">=</text>
<text transform="translate(620.85,761) scale(1.0000,1)" fill="#6a6aa0" font-size="13">=</text>
<text transform="translate(620.85,776) scale(1.0000,1)" fill="#6a6aa0" font-size="13">=</text>
<text transform="translate(670.40,716) scale(1.0000,1)" fill="#6a6aa0" font-size="13">=</text>
<text transform="translate(670.40,746) scale(1.0000,1)" fill="#6a6aa0" font-size="13">=</text>
<text transform="translate(670.40,761) scale(1.0000,1)" fill="#6a6aa0" font-size="13">=</text>
<text transform="translate(670.40,776) scale(1.0000,1)" fill="#6a6aa0" font-size="13">=</text>
<text transform="translate(719.95,716) scale(1.0000,1)" fill="#6a6aa0" font-size="13">=</text>
<text transform="translate(719.95,746) scale(1.0000,1)" fill="#6a6aa0" font-size="13">=</text>
<text transform="translate(719.95,761) scale(1.0000,1)" fill="#6a6aa0" font-size="13">=</text>
<text transform="translate(719.95,776) scale(1.0000,1)" fill="#6a6aa0" font-size="13">=</text>
<text transform="translate(769.50,716) scale(1.0000,1)" fill="#6a6aa0" font-size="13">=</text>
<text transform="translate(769.50,746) scale(1.0000,1)" fill="#6a6aa0" font-size="13">=</text>
<text transform="translate(769.50,761) scale(1.0000,1)" fill="#6a6aa0" font-size="13">=</text>
<text transform="translate(769.50,776) scale(1.0000,1)" fill="#6a6aa0" font-size="13">=</text>
<text transform="translate(819.05,716) scale(1.0000,1)" fill="#6a6aa0" font-size="13">=</text>
<text transform="translate(819.05,746) scale(1.0000,1)" fill="#6a6aa0" font-size="13">=</text>
<text transform="translate(819.05,761) scale(1.0000,1)" fill="#6a6aa0" font-size="13">=</text>
<text transform="translate(819.05,776) scale(1.0000,1)" fill="#6a6aa0" font-size="13">=</text>
<text transform="translate(868.60,716) scale(1.0000,1)" fill="#6a6aa0" font-size="13">=</text>
<text transform="translate(868.60,746) scale(1.0000,1)" fill="#6a6aa0" font-size="13">=</text>
<text transform="translate(868.60,761) scale(1.0000,1)" fill="#6a6aa0" font-size="13">=</text>
<text transform="translate(868.60,776) scale(1.0000,1)" fill="#6a6aa0" font-size="13">=</text>
<text transform="translate(918.15,716) scale(1.0000,1)" fill="#6a6aa0" font-size="13">=</text>
<text transform="translate(918.15,746) scale(1.0000,1)" fill="#6a6aa0" font-size="13">=</text>
<text transform="translate(918.15,761) scale(1.0000,1)" fill="#6a6aa0" font-size="13">=</text>
<text transform="translate(918.15,776) scale(1.0000,1)" fill="#6a6aa0" font-size="13">=</text>
<text transform="translate(175.19,730) scale(0.9286,1)" fill="#0c0c78" font-size="14" stroke="#0c0c78" stroke-width="0.15">T</text>
<text transform="translate(223.34,730) scale(0.9286,1)" fill="#8a8ab8" font-size="14">G</text>
<text transform="translate(272.89,730) scale(0.9286,1)" fill="#0c0c78" font-size="14" stroke="#0c0c78" stroke-width="0.15">G</text>
<text transform="translate(322.91,730) scale(0.9286,1)" fill="#8a8ab8" font-size="14">C</text>
<text transform="translate(372.92,730) scale(0.9286,1)" fill="#0c0c78" font-size="14" stroke="#0c0c78" stroke-width="0.15">A</text>
<text transform="translate(421.54,730) scale(0.9286,1)" fill="#8a8ab8" font-size="14">G</text>
<text transform="translate(472.49,730) scale(0.9286,1)" fill="#8a8ab8" font-size="14">T</text>
<text transform="translate(521.11,730) scale(0.9286,1)" fill="#0c0c78" font-size="14" stroke="#0c0c78" stroke-width="0.15">C</text>
<text transform="translate(570.66,730) scale(0.9286,1)" fill="#8a8ab8" font-size="14">C</text>
<text transform="translate(620.67,730) scale(0.9286,1)" fill="#8a8ab8" font-size="14">A</text>
<text transform="translate(670.69,730) scale(0.9286,1)" fill="#0c0c78" font-size="14" stroke="#0c0c78" stroke-width="0.15">T</text>
<text transform="translate(718.84,730) scale(0.9286,1)" fill="#0c0c78" font-size="14" stroke="#0c0c78" stroke-width="0.15">G</text>
<text transform="translate(768.39,730) scale(0.9286,1)" fill="#0c0c78" font-size="14" stroke="#0c0c78" stroke-width="0.15">G</text>
<text transform="translate(820.55,730) scale(1.0000,1)" fill="#8a8ab8" font-size="13">-</text>
<text transform="translate(870.10,730) scale(1.0000,1)" fill="#8a8ab8" font-size="13">-</text>
<text transform="translate(919.65,730) scale(1.0000,1)" fill="#8a8ab8" font-size="13">-</text>
<rect x="701" y="717" width="1" height="14" fill="#e88300" shape-rendering="crispEdges"/>
<text transform="translate(440.87,806) scale(0.9286,1)" x="0.00 9.69 17.23 24.77 32.31 39.85 44.15 47.38 54.92 62.46 66.77 76.46 79.69 87.23 99.08 106.62 114.15 118.46 126.00 130.31 137.85 145.38 149.69 159.38 166.92 174.46 182.00 189.54 193.85 205.69 213.23 220.77 228.31 235.85" fill="#000" font-size="14">Repeating Elements by RepeatMasker</text>
<text transform="translate(67.67,820) scale(0.9286,1)" x="0.00 9.69 17.23 24.77 32.31 39.85 44.15 56.00 63.54 71.08 78.62 86.15" fill="#000" font-size="14">RepeatMasker</text>
<rect x="156" y="808" width="793" height="15" fill="#000" shape-rendering="crispEdges"/>
</svg>
</body></html>
